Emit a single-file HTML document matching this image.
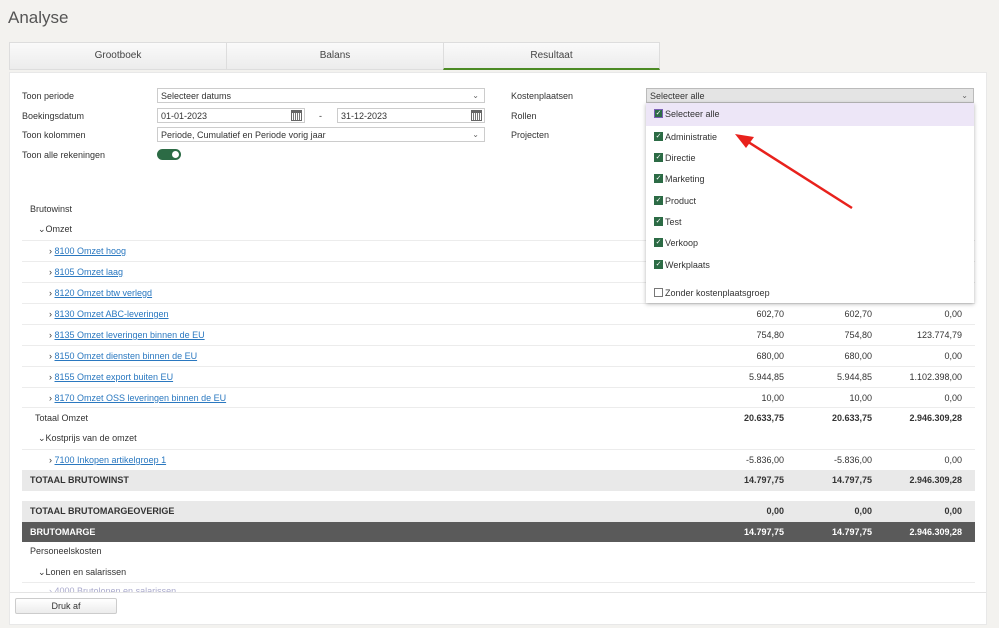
<!DOCTYPE html>
<html><head><meta charset="utf-8"><style>
*{box-sizing:border-box;margin:0;padding:0}
body{width:999px;height:628px;background:#f3f2ef;font-family:"Liberation Sans",sans-serif;font-size:9px;color:#333;position:relative;overflow:hidden}
.a{position:absolute}
h1{position:absolute;left:8px;top:8px;font-weight:normal;font-size:17px;color:#555}
.tab{position:absolute;top:42px;height:28px;background:linear-gradient(#fafafa,#ececec);border:1px solid #ddd;text-align:center;line-height:26px;font-size:10px;color:#444}
.panel{position:absolute;left:9px;top:72px;width:978px;height:553px;background:#fff;border:1px solid #e8e8e8}
.lbl{position:absolute;font-size:9px;color:#333}
.inp{position:absolute;height:15px;border:1px solid #ccc;background:#fff;font-size:9px;line-height:14px;padding-left:3px;color:#333}
.chev{position:absolute;right:5px;top:0;font-size:8px;color:#666}
.cal{position:absolute;right:2px;top:1px;width:11px;height:11px;border:1px solid #666;border-top-width:3px;background:repeating-linear-gradient(90deg,#fff 0 1px,#777 1px 2px)}
.row{position:absolute;left:22px;width:953px;height:21px;line-height:21px;border-top:1px solid #ececec;font-size:9px}
.row span{position:absolute}
.n1{right:191px}.n2{right:103px}.n3{right:13px}
.lk{color:#2a78c0;text-decoration:underline}
.b{font-weight:bold}
.dd{position:absolute;left:646px;top:103px;width:328px;height:200px;background:#fff;box-shadow:0 1px 4px rgba(0,0,0,.3);z-index:5}
.it{position:absolute;left:8px;font-size:9px;line-height:10px;height:10px;padding-left:11px}
.cb{position:absolute;left:0;top:0;width:9px;height:9px;background:#2c6b45;border:1px solid #2c6b45;color:#fff;font-size:7px;line-height:8px;text-align:center}
</style></head><body>
<h1>Analyse</h1>
<div class="tab" style="left:9px;width:218px">Grootboek</div>
<div class="tab" style="left:226px;width:218px">Balans</div>
<div class="tab" style="left:443px;width:217px;border-bottom:2px solid #4b8a24">Resultaat</div>
<div class="panel"></div>
<div class="lbl" style="left:22px;top:91px">Toon periode</div>
<div class="lbl" style="left:22px;top:111px">Boekingsdatum</div>
<div class="lbl" style="left:22px;top:130px">Toon kolommen</div>
<div class="lbl" style="left:22px;top:150px">Toon alle rekeningen</div>
<div class="inp" style="left:157px;top:88px;width:328px">Selecteer datums<span class="chev">⌄</span></div>
<div class="inp" style="left:157px;top:108px;width:148px">01-01-2023<span class="cal"></span></div>
<div class="lbl" style="left:319px;top:111px">-</div>
<div class="inp" style="left:337px;top:108px;width:148px">31-12-2023<span class="cal"></span></div>
<div class="inp" style="left:157px;top:127px;width:328px">Periode, Cumulatief en Periode vorig jaar<span class="chev">⌄</span></div>
<div class="a" style="left:157px;top:149px;width:24px;height:11px;border-radius:6px;background:#2c6b45"><div class="a" style="right:2px;top:2px;width:7px;height:7px;border-radius:50%;background:#fff"></div></div>
<div class="lbl" style="left:511px;top:91px">Kostenplaatsen</div>
<div class="lbl" style="left:511px;top:111px">Rollen</div>
<div class="lbl" style="left:511px;top:130px">Projecten</div>
<div class="inp" style="left:646px;top:88px;width:328px;background:#e4e4e4;border-color:#bbb">Selecteer alle<span class="chev">⌄</span></div>
<div class="dd">
<div class="a" style="left:0;top:0;width:328px;height:23px;background:#ede6f7"></div>
<div class="it" style="top:6px"><span class="cb" style="border-color:#7a5fb5">✓</span>Selecteer alle</div>
<div class="it" style="top:29px"><span class="cb">✓</span>Administratie</div>
<div class="it" style="top:50px"><span class="cb">✓</span>Directie</div>
<div class="it" style="top:71px"><span class="cb">✓</span>Marketing</div>
<div class="it" style="top:93px"><span class="cb">✓</span>Product</div>
<div class="it" style="top:114px"><span class="cb">✓</span>Test</div>
<div class="it" style="top:135px"><span class="cb">✓</span>Verkoop</div>
<div class="it" style="top:157px"><span class="cb">✓</span>Werkplaats</div>
<div class="it" style="top:185px"><span class="cb" style="background:#fff;border-color:#777"></span>Zonder kostenplaatsgroep</div>
</div>
<svg class="a" style="left:730px;top:130px;z-index:6" width="130" height="85"><line x1="122" y1="78" x2="12" y2="8" stroke="#e8211c" stroke-width="2.5"/><polygon points="5,4 24,7 16,18" fill="#e8211c"/></svg>

<div class="row" style="top:199px;border:none"><span style="left:8px">Brutowinst</span></div>
<div class="row" style="top:219px;border:none"><span style="left:16px">⌄Omzet</span></div>
<div class="row" style="top:240px"><span style="left:27px">›&nbsp;<a class="lk">8100 Omzet hoog</a></span></div>
<div class="row" style="top:261px"><span style="left:27px">›&nbsp;<a class="lk">8105 Omzet laag</a></span></div>
<div class="row" style="top:282px"><span style="left:27px">›&nbsp;<a class="lk">8120 Omzet btw verlegd</a></span></div>
<div class="row" style="top:303px"><span style="left:27px">›&nbsp;<a class="lk">8130 Omzet ABC-leveringen</a></span><span class="n1">602,70</span><span class="n2">602,70</span><span class="n3">0,00</span></div>
<div class="row" style="top:324px"><span style="left:27px">›&nbsp;<a class="lk">8135 Omzet leveringen binnen de EU</a></span><span class="n1">754,80</span><span class="n2">754,80</span><span class="n3">123.774,79</span></div>
<div class="row" style="top:345px"><span style="left:27px">›&nbsp;<a class="lk">8150 Omzet diensten binnen de EU</a></span><span class="n1">680,00</span><span class="n2">680,00</span><span class="n3">0,00</span></div>
<div class="row" style="top:366px"><span style="left:27px">›&nbsp;<a class="lk">8155 Omzet export buiten EU</a></span><span class="n1">5.944,85</span><span class="n2">5.944,85</span><span class="n3">1.102.398,00</span></div>
<div class="row" style="top:387px"><span style="left:27px">›&nbsp;<a class="lk">8170 Omzet OSS leveringen binnen de EU</a></span><span class="n1">10,00</span><span class="n2">10,00</span><span class="n3">0,00</span></div>
<div class="row" style="top:407px"><span style="left:13px">Totaal Omzet</span><span class="n1 b">20.633,75</span><span class="n2 b">20.633,75</span><span class="n3 b">2.946.309,28</span></div>
<div class="row" style="top:428px;border:none"><span style="left:16px">⌄Kostprijs van de omzet</span></div>
<div class="row" style="top:449px"><span style="left:27px">›&nbsp;<a class="lk">7100 Inkopen artikelgroep 1</a></span><span class="n1">-5.836,00</span><span class="n2">-5.836,00</span><span class="n3">0,00</span></div>
<div class="row b" style="top:470px;background:#e9e9e9;border:none"><span style="left:8px">TOTAAL BRUTOWINST</span><span class="n1">14.797,75</span><span class="n2">14.797,75</span><span class="n3">2.946.309,28</span></div>
<div class="row b" style="top:501px;background:#e9e9e9;border:none"><span style="left:8px">TOTAAL BRUTOMARGEOVERIGE</span><span class="n1">0,00</span><span class="n2">0,00</span><span class="n3">0,00</span></div>
<div class="row b" style="top:522px;height:20px;line-height:20px;background:#5a5a5a;color:#fff;border:none"><span style="left:8px">BRUTOMARGE</span><span class="n1">14.797,75</span><span class="n2">14.797,75</span><span class="n3">2.946.309,28</span></div>
<div class="row" style="top:541px;border:none"><span style="left:8px">Personeelskosten</span></div>
<div class="row" style="top:562px;border:none"><span style="left:16px">⌄Lonen en salarissen</span></div>
<div class="row" style="top:582px;height:10px;overflow:hidden;color:#aac"><span style="left:27px;top:-2px">›&nbsp;4000 Brutolonen en salarissen</span></div>
<div class="a" style="left:10px;top:592px;width:976px;height:32px;background:#fff;border-top:1px solid #e4e4e4"></div>
<div class="a" style="left:15px;top:598px;width:102px;height:16px;border:1px solid #ccc;border-radius:2px;background:linear-gradient(#fff,#ececec);text-align:center;line-height:14px;font-size:9px">Druk af</div>
</body></html>
